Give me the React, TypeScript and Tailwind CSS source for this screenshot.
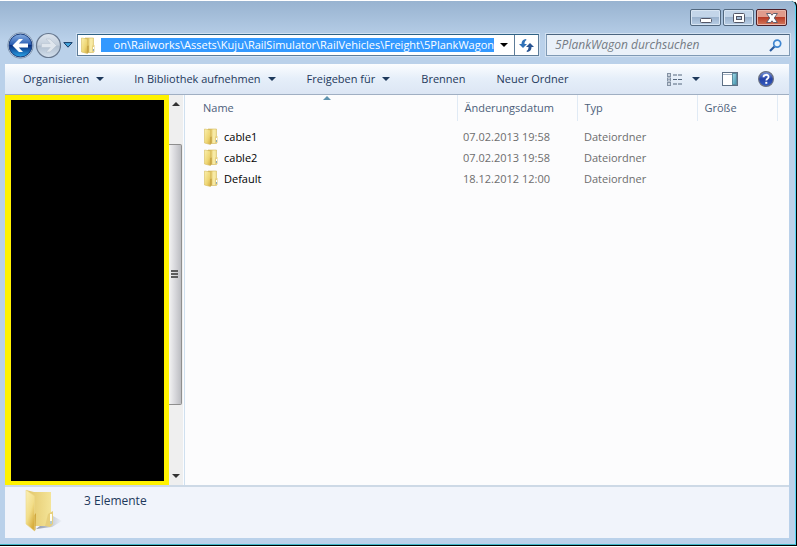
import { useEffect, useRef } from "react";

const files = [
  { name: "cable1", date: "07.02.2013 19:58", type: "Dateiordner" },
  { name: "cable2", date: "07.02.2013 19:58", type: "Dateiordner" },
  { name: "Default", date: "18.12.2012 12:00", type: "Dateiordner" },
];

function Caret({ className = "" }: { className?: string }) {
  return (
    <svg viewBox="0 0 8 4" className={`h-1 w-2 shrink-0 ${className}`} aria-hidden="true">
      <path d="M0 0h8L4 4z" fill="currentColor" />
    </svg>
  );
}

function FolderIcon({ className = "" }: { className?: string }) {
  return (
    <svg viewBox="0 0 16 17" className={`shrink-0 ${className}`} aria-hidden="true">
      <defs>
        <linearGradient id="folderFront" x1="0" y1="0" x2="1" y2="1">
          <stop offset="0" stopColor="#fbf0ae" />
          <stop offset="0.6" stopColor="#eed674" />
          <stop offset="1" stopColor="#d2aa40" />
        </linearGradient>
        <linearGradient id="folderBack" x1="0" y1="0" x2="1" y2="0">
          <stop offset="0" stopColor="#c39f3c" />
          <stop offset="0.5" stopColor="#e9d076" />
          <stop offset="1" stopColor="#f3e394" />
        </linearGradient>
      </defs>
      <path d="M5 1h8.500v14.500H6z" fill="url(#folderBack)" stroke="#d3ba5f" strokeWidth="0.6" />
      <path d="M9.500 1.500h3V15h-3z" fill="#f7eaa6" />
      <path d="M12 8.500 14.500 8v7h-2.500z" fill="#e6d081" />
      <path d="M13 10h1v4h-1z" fill="#fff" />
      <path d="M13.200 12h.8v2h-.8z" fill="#6f95a8" />
      <path d="M1.500 1 7.500 2v14.500L1.500 15z" fill="url(#folderFront)" stroke="#d6bd60" strokeWidth="0.6" />
      <path d="M7.500 9 8.500 8.500v6.700l-1 1z" fill="#b89133" />
    </svg>
  );
}

function LargeFolderIcon() {
  return (
    <svg viewBox="0 0 42 46" className="mt-px h-[46px] w-[42px] shrink-0" aria-hidden="true">
      <defs>
        <linearGradient id="bigFront" x1="0" y1="0" x2="0.6" y2="1">
          <stop offset="0" stopColor="#fbf0b7" />
          <stop offset="0.6" stopColor="#f2dd88" />
          <stop offset="1" stopColor="#d8ae3e" />
        </linearGradient>
        <linearGradient id="bigBack" x1="0" y1="0" x2="1" y2="0">
          <stop offset="0" stopColor="#e2c568" />
          <stop offset="1" stopColor="#f4e498" />
        </linearGradient>
        <linearGradient id="bigShade" x1="0" y1="0" x2="1" y2="0">
          <stop offset="0" stopColor="#8e97a8" />
          <stop offset="1" stopColor="#eef2f9" />
        </linearGradient>
      </defs>
      <path d="M29 28 38 33 28 39 12 41z" fill="url(#bigShade)" />
      <path d="M2 2 10 4h17v34H10z" fill="url(#bigBack)" />
      <path d="m24 26 5-3v13l-3 3-5-1z" fill="#e7cf7b" />
      <path d="M26 26h2v10h-2z" fill="#fffdf0" />
      <path d="M26.500 33h1v3h-1z" fill="#6f95a8" />
      <path d="m2 2 8.500 6v35L2 36z" fill="url(#bigFront)" stroke="#ecd98c" strokeWidth="0.6" />
      <path d="m10.500 27 1.500-2-.5 17-1 1z" fill="#d0a63c" />
    </svg>
  );
}

function NavButtons() {
  return (
    <div className="flex h-[26px] w-[68px] shrink-0 items-center">
      <button aria-label="Zurück" className="size-[27px] shrink-0">
        <svg viewBox="0 0 27 27" className="size-[27px]">
          <defs>
            <linearGradient id="back" x1="0" y1="0" x2="0" y2="1">
              <stop offset="0" stopColor="#88aee2" />
              <stop offset="0.45" stopColor="#2c60b4" />
              <stop offset="0.5" stopColor="#0a2f80" />
              <stop offset="1" stopColor="#2aa5e8" />
            </linearGradient>
          </defs>
          <circle cx="13.500" cy="13.500" r="12.800" fill="#d4e2f1" stroke="#8196b0" />
          <circle cx="13.500" cy="13.500" r="11.500" fill="url(#back)" stroke="#1c3f7d" />
          <path d="m5.500 13.500 6.500-6.500h4l-4.200 4.500H21v4h-9.200L16 20h-4z" fill="#fff" />
        </svg>
      </button>
      <button aria-label="Vorwärts" className="size-[27px] shrink-0">
        <svg viewBox="0 0 27 27" className="size-[27px]">
          <defs>
            <linearGradient id="forward" x1="0" y1="0" x2="0" y2="1">
              <stop offset="0" stopColor="#dde5ee" />
              <stop offset="0.48" stopColor="#c3cfdc" />
              <stop offset="0.52" stopColor="#b0bfcf" />
              <stop offset="1" stopColor="#d5e1ee" />
            </linearGradient>
          </defs>
          <circle cx="14.500" cy="13.500" r="12" fill="url(#forward)" stroke="#66778e" strokeWidth="1.200" />
          <path d="m22.500 13.500-6.500-6.500h-4l4.200 4.500H7.500v4h8.700L12 20h4z" fill="#dfe6ed" stroke="#b9c5d1" strokeWidth="0.6" />
        </svg>
      </button>
      <button aria-label="Letzte Seiten" className="flex h-6 w-[14px] items-center justify-center">
        <svg viewBox="0 0 10 6" className="h-[6px] w-[10px]">
          <path d="M.8.600h8.400L5 5.200z" fill="#42a5de" stroke="#173b66" />
        </svg>
      </button>
    </div>
  );
}

function AddressBar() {
  const ref = useRef<HTMLInputElement>(null);
  useEffect(() => {
    if (ref.current) ref.current.scrollLeft = ref.current.scrollWidth;
  }, []);
  return (
    <div className="flex h-[22px] min-w-0 flex-1 border border-[#5d7c99] border-t-[#2f6285] bg-white outline outline-[#d3e2f2]">
      <FolderIcon className="my-auto mr-[5px] ml-[2px] h-[17px] w-4" />
      <input
        ref={ref}
        aria-label="Adresse"
        readOnly
        defaultValue="on\Railworks\Assets\Kuju\RailSimulator\RailVehicles\Freight\5PlankWagon"
        className="my-[3px] min-w-0 flex-1 bg-[#3399ff] text-right text-white outline-none"
      />
      <button aria-label="Verlauf" className="flex w-[20px] items-center justify-center text-black">
        <Caret />
      </button>
      <button aria-label="Aktualisieren" className="flex w-[24px] items-center justify-center border-l border-[#5d7c99]">
        <svg viewBox="0 0 15 13" className="h-[13px] w-[15px]" fill="#2f71b8">
          <path d="M7 0C4 .500 2.500 2 2.500 5H0l4 4 4-4H5.500c0-2 .500-3 2-4z" />
          <path d="M8 13c3-.500 4.500-2 4.500-5H15l-4-4-4 4h2.500c0 2-.500 3-2 4z" fill="#285493" />
        </svg>
      </button>
    </div>
  );
}

function SearchBox() {
  return (
    <label className="flex h-[22px] w-[244px] shrink-0 items-center border border-[#7f9ab5] border-t-[#4b6580] bg-[#eaf1f9] pr-[7px] pl-2 outline outline-[#d3e2f2]">
      <input
        type="search"
        aria-label="Suchen"
        placeholder="5PlankWagon durchsuchen"
        className="min-w-0 flex-1 bg-transparent text-[12px] italic outline-none placeholder:text-[#747b83]"
      />
      <svg viewBox="0 0 13 13" className="size-[13px]" fill="none" aria-hidden="true">
        <path d="m1 12 4.500-4.500" stroke="#285a9e" strokeWidth="2.200" />
        <circle cx="8.200" cy="4.600" r="3.500" fill="#e9f4fd" stroke="#3f86d0" strokeWidth="1.700" />
      </svg>
    </label>
  );
}

function WindowButtons() {
  const base =
    "flex h-[17px] w-[31px] items-center justify-center rounded-[2px] border border-[#52687f] bg-linear-to-b from-[#c3d5e9] from-45% via-[#9bb3ce] via-50% to-[#b9cee5] inset-ring inset-ring-[#d8e5f3]";
  return (
    <div className="flex justify-end gap-[2px] pt-[8px] pr-[2px]">
      <button aria-label="Minimieren" className={base}>
        <svg viewBox="0 0 12 10" className="h-[10px] w-3">
          <rect x=".5" y="5.500" width="11" height="4" rx="1" fill="#fff" stroke="#535666" />
        </svg>
      </button>
      <button aria-label="Maximieren" className={base}>
        <svg viewBox="0 0 12 10" className="h-[10px] w-3">
          <rect x=".5" y=".5" width="11" height="9" rx="1" fill="#fff" stroke="#535666" />
          <rect x="3.500" y="3.500" width="5" height="3" fill="#a8bed6" stroke="#535666" />
        </svg>
      </button>
      <button
        aria-label="Schließen"
        className="flex h-[17px] w-[31px] items-center justify-center rounded-[2px] border border-[#4c2029] bg-linear-to-b from-[#e09b8c] from-45% via-[#b83b26] via-50% to-[#d2765b] inset-ring inset-ring-[#e8b5a9]"
      >
        <svg viewBox="0 0 12 10" className="h-[10px] w-3">
          <path d="M.6.500h4L6 2.200 7.400.500h4L8.300 5l3.100 4.500h-4L6 7.800 4.600 9.500h-4L3.700 5z" fill="#fff" stroke="#535666" strokeWidth=".9" />
        </svg>
      </button>
    </div>
  );
}

function Toolbar() {
  return (
    <div className="flex h-[31px] items-center border-b border-[#a0afc3] bg-linear-to-b from-[#fbfdff] via-[#e5eef9] via-50% to-[#dce6f4] pr-[15px] pl-[18px] text-[#1e395b]">
      <button className="flex items-center gap-[7px]">Organisieren <Caret /></button>
      <button className="ml-[30px] flex items-center gap-[7px]">In Bibliothek aufnehmen <Caret /></button>
      <button className="ml-[31px] flex items-center gap-[7px]">Freigeben für <Caret /></button>
      <button className="ml-[31px]">Brennen</button>
      <button className="ml-[31px]">Neuer Ordner</button>
      <button aria-label="Ansicht" className="ml-auto">
        <svg viewBox="0 0 15 13" className="h-[13px] w-[15px]">
          {[0, 4.5, 9].map((y) => (
            <g key={y}>
              <rect x=".5" y={y + 0.5} width="3" height="3" fill="#fff" stroke="#8492a4" />
              <path d={`M1.500 ${y + 2}h1`} stroke="#35557c" />
              <path d={`M6 ${y + 2}h4m1 0h4`} stroke="#55677d" />
            </g>
          ))}
        </svg>
      </button>
      <button aria-label="Weitere Optionen" className="ml-[10px] flex h-5 items-center"><Caret /></button>
      <button aria-label="Vorschaufenster" className="ml-[22px]">
        <svg viewBox="0 0 16 14" className="h-[14px] w-4">
          <defs>
            <linearGradient id="pane" x1="0" y1="0" x2="1" y2="1">
              <stop offset="0" stopColor="#a9dcea" />
              <stop offset="1" stopColor="#3d93ad" />
            </linearGradient>
          </defs>
          <rect x=".5" y=".5" width="15" height="13" fill="#fff" stroke="#5d7085" />
          <path d="M1 2.500h9" stroke="#a2b2c4" />
          <rect x="10.500" y="1.500" width="4" height="11" fill="url(#pane)" stroke="#5a8da0" />
        </svg>
      </button>
      <button aria-label="Hilfe" className="ml-5">
        <svg viewBox="0 0 16 16" className="size-4">
          <defs>
            <linearGradient id="help" x1="0" y1="0" x2="0" y2="1">
              <stop offset="0" stopColor="#7b98df" />
              <stop offset="0.5" stopColor="#2341a5" />
              <stop offset="1" stopColor="#365fc4" />
            </linearGradient>
          </defs>
          <circle cx="8" cy="8" r="7.400" fill="url(#help)" stroke="#6b7284" strokeWidth="1.200" />
          <path d="M5.500 6.200C5.500 3 10.600 3 10.600 6c0 1.800-2.300 1.800-2.300 3.500" fill="none" stroke="#fff" strokeWidth="1.800" />
          <rect x="7.300" y="10.800" width="2" height="2" fill="#fff" />
        </svg>
      </button>
    </div>
  );
}

function ScrollBar() {
  return (
    <div className="flex w-[15px] flex-col items-start border-r border-[#fafcff] bg-[#efefef]">
      <button aria-label="Nach oben" className="flex h-[18px] w-[13px] items-center justify-center text-[#333]">
        <Caret className="rotate-180" />
      </button>
      <div className="flex w-[13px] flex-1 flex-col pt-[31px]">
        <div className="flex min-h-10 flex-[261] flex-col items-start justify-center gap-px rounded-r-[2px] border border-l-0 border-[#8e8e8e] bg-linear-to-r from-[#f3f3f3] via-[#d8d8dc] via-50% to-[#bcbdc2] pl-[2px]">
          <span className="h-[2px] w-[7px] bg-[#5c5c5c]" />
          <span className="h-[2px] w-[7px] bg-[#5c5c5c]" />
          <span className="h-[2px] w-[7px] bg-[#5c5c5c]" />
        </div>
        <div className="flex-[63]" />
      </div>
      <button aria-label="Nach unten" className="flex h-[18px] w-[13px] items-center justify-center text-[#333]">
        <Caret />
      </button>
    </div>
  );
}

function FileList() {
  const head = "border-r border-[#e0eaf5] pl-[7px] text-left font-normal text-[#4c607a]";
  return (
    <div className="min-w-0 flex-1 border-l border-[#d0e0ef] bg-[#fcfcfd]">
      <table className="w-full table-fixed">
        <thead>
          <tr className="h-[26px]">
            <th className="w-[272px] border-r border-[#e0eaf5] pl-[18px] text-left font-normal text-[#4c607a]">
              <div className="relative">
                Name
                <svg viewBox="0 0 8 4" className="absolute -top-1 left-[120px] h-1 w-2" aria-hidden="true">
                  <path d="M0 4h8L4 0z" fill="#5f93ae" />
                </svg>
              </div>
            </th>
            <th className={`w-[120px] ${head}`}>Änderungsdatum</th>
            <th className={`w-[120px] ${head}`}>Typ</th>
            <th className={`w-[80px] ${head}`}>Größe</th>
            <th aria-label="Weitere" />
          </tr>
        </thead>
        <tbody className="before:block before:h-[5px]">
          {files.map((f) => (
            <tr key={f.name} className="h-[21px]">
              <td className="pl-[18px] text-black">
                <div className="flex items-center gap-[5px]">
                  <FolderIcon className="h-[17px] w-4" />
                  {f.name}
                </div>
              </td>
              <td className="pl-[6px] text-[#6d6d6d]">{f.date}</td>
              <td className="pl-[7px] text-[#6d6d6d]">{f.type}</td>
              <td />
              <td />
            </tr>
          ))}
        </tbody>
      </table>
    </div>
  );
}

export default function App() {
  return (
    <div className="flex min-h-screen flex-col bg-white font-['Open_Sans','Noto_Sans',sans-serif] text-[11px] leading-4">
      <div className="flex flex-1 flex-col rounded-tr-[6px] border-t border-r border-b border-t-white border-r-black border-b-black bg-black">
        <div className="flex flex-1 flex-col rounded-tr-[6px] border-r border-b border-r-[#55d5f5] border-b-[#3fb6c6] bg-[#bad1ea] bg-linear-to-b from-[#98b3d0] to-[#bad1ea] to-[40px] pr-[6px] pb-[6px] pl-[5px]">
          <WindowButtons />
          <header className="-mr-px flex items-center gap-[7px] pt-[6px] pb-[6px]">
            <div className="flex min-w-0 flex-1 items-center gap-[2px] pl-[2px]">
              <NavButtons />
              <AddressBar />
            </div>
            <SearchBox />
          </header>
          <Toolbar />
          <main className="flex flex-1">
            <aside className="w-[164px] border-[5px] border-b-4 border-l-[6px] border-[#fff200] bg-black" aria-label="Navigation" />
            <ScrollBar />
            <FileList />
          </main>
          <footer className="flex h-[53px] border-t-2 border-[#cdd9e6] bg-[#f1f4fb] pl-[19px] text-[#1e395b]">
            <LargeFolderIcon />
            <p className="pt-[6px] pl-[18px] text-[12px]">3 Elemente</p>
          </footer>
        </div>
      </div>
      <div className="h-px" />
    </div>
  );
}
